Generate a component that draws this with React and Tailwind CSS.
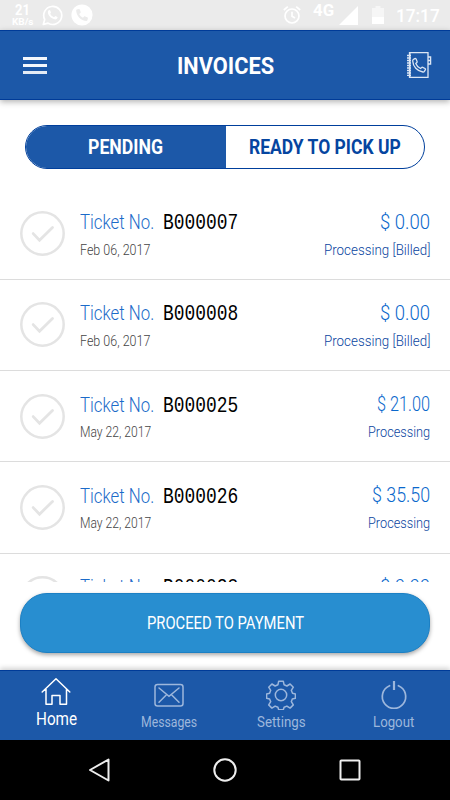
import React, { useLayoutEffect, useRef, useState } from "react";

const invoices = [
  { ticket: "B000007", date: "Feb 06, 2017", dateWidth: 70, amount: "$ 0.00", amountWidth: 50, status: "Processing [Billed]", statusWidth: 106 },
  { ticket: "B000008", date: "Feb 06, 2017", dateWidth: 70, amount: "$ 0.00", amountWidth: 50, status: "Processing [Billed]", statusWidth: 106 },
  { ticket: "B000025", date: "May 22, 2017", dateWidth: 71, amount: "$ 21.00", amountWidth: 53, status: "Processing", statusWidth: 62 },
  { ticket: "B000026", date: "May 22, 2017", dateWidth: 71, amount: "$ 35.50", amountWidth: 58, status: "Processing", statusWidth: 62 },
  { ticket: "B000028", amount: "$ 0.00", amountWidth: 50 },
];

// Condenses a single line of text to the given width
function Condensed({ width, className = "", children }) {
  const ref = useRef(null);
  const [scale, setScale] = useState(1);

  useLayoutEffect(() => {
    setScale(width / ref.current.offsetWidth);
  }, [width, children]);

  return (
    <span className={`block shrink-0 whitespace-nowrap ${className}`} style={{ width }}>
      <span ref={ref} className="inline-block origin-left" style={{ transform: `scaleX(${scale})` }}>
        {children}
      </span>
    </span>
  );
}

function StatusBar() {
  return (
    <div className="flex h-[30px] shrink-0 items-center justify-between bg-[#ebebeb] pl-[11px] pr-[10px] text-white">
      <div className="flex items-center">
        <div className="flex w-[22px] flex-col items-center font-bold">
          <Condensed width={15} className="h-[14px] text-[15.500px] leading-[14px]">21</Condensed>
          <Condensed width={21} className="h-[11px] text-[9px] leading-[11px]">KB/s</Condensed>
        </div>
        <svg className="ml-[9px] h-[22px] w-[21px]" viewBox="0 0 21 22" fill="none" stroke="currentColor">
          <path d="M1.300 20.500l1.400-5A9 9 0 1 1 6 19.100z" strokeWidth="1.700" strokeLinejoin="round" />
          <path d="M6.400 6.500c.8-1 1.500-.6 1.800 0l.8 1.900-.8 1.300c1 1.800 2 2.700 3.800 3.500l1.400-1.200 2 1c.5.4 0 1.500-.8 2.100-1 .7-2.800.3-4.600-.8-2.100-1.300-4-3.800-4.100-5.400 0-1 .1-1.900.5-2.400z" fill="currentColor" stroke="none" />
        </svg>
        <svg className="ml-[8px] h-[22px] w-[22px]" viewBox="0 0 22 22">
          <circle cx="11" cy="11" r="10.600" fill="white" />
          <path d="M5.800 5.500L8 5c.5 0 .7.300.9.800l.8 2.200c.1.400 0 .7-.3 1L8.200 10c.9 1.800 2 2.900 3.800 3.800l1.100-1.200c.3-.3.600-.4 1-.2l2.200.8c.5.2.7.500.6 1l-.5 2.100c-.1.400-.4.700-.9.700C9.900 16.800 5.200 12 5.200 6.300c0-.4.2-.7.6-.8z" fill="#ebebeb" />
        </svg>
      </div>
      <div className="flex h-full items-center">
        <svg className="h-[20px] w-[18px]" viewBox="0 0 18 20" fill="none" stroke="currentColor" strokeWidth="1.700">
          <circle cx="9" cy="11" r="7" />
          <path d="M9 6.800v4.500l3 1.800M.8 5l4-3.400M17.200 5l-4-3.400" />
        </svg>
        <Condensed width={21} className="mb-[8px] ml-[12px] text-[16px] leading-[16px] font-bold">4G</Condensed>
        <svg className="ml-[5px] h-[19px] w-[19px]" viewBox="0 0 19 19">
          <path d="M19 0v19H0z" fill="white" />
        </svg>
        <svg className="ml-[14px] h-[18px] w-[12px]" viewBox="0 0 12 18">
          <path d="M3.500 0h5v2H12v9H0V2h3.500z" fill="#f6f6f6" />
          <path d="M0 11h12v7H0z" fill="white" />
        </svg>
        <Condensed width={44} className="mt-[2px] ml-[12px] text-[18px] leading-[18px] font-medium">17:17</Condensed>
      </div>
    </div>
  );
}

function Header() {
  return (
    <header className="z-10 flex h-[70px] shrink-0 items-center justify-between border-y border-[#003b98] bg-[#1c58a8] pr-[18px] pl-[23px] text-white shadow-[0_2px_6px_rgba(0,0,0,0.3)]">
      <div className="flex w-[24px] flex-col gap-[4px]">
        <span className="h-[3px] bg-[#f4f7fc]" />
        <span className="h-[3px] bg-[#f4f7fc]" />
        <span className="h-[3px] bg-[#e4ebf5]" />
      </div>
      <h1 className="mt-[2px] mr-[3px]">
        <Condensed width={97} className="text-[24px] leading-[30px] font-bold">INVOICES</Condensed>
      </h1>
      <svg className="h-[28px] w-[26px]" viewBox="0 0 26 28" fill="none" stroke="#dce6f4" strokeWidth="1.300">
        <path d="M3.500 1.600H22v24.800H3.500z" />
        <path d="M4.500 1.600v24.800" strokeWidth="1" strokeOpacity=".5" />
        <path d="M1 4.500h4M1 7h4M1 9.500h4M1 12h4M1 14.500h4M1 17h4M1 19.500h4M1 22h4M1 24.300h4" />
        <path d="M22 6h2.600v7H22M22 9.500h2.600" />
        <path d="M7.300 8.500l1.500-.9c.6-.3 1-.1 1.300.5l1 2.500c.2.500 0 .8-.3 1l-1 .9c.9 2.300 2.400 4 4.700 5l1.100-1c.3-.3.700-.4 1.100-.2l2.300 1.200c.5.3.7.700.4 1.200l-1 1.600c-.4.6-.9.8-1.500.7-5.700-.9-9.900-5.500-10.200-11 0-.7.100-1.200.6-1.500z" />
      </svg>
    </header>
  );
}

function Tabs() {
  return (
    <div className="mx-[25px] mt-[25px] flex h-[44px] shrink-0 overflow-hidden rounded-[22px] border border-[#003f9c] font-bold">
      <div className="flex w-[200px] items-center justify-center bg-[#1c58a8] text-white">
        <Condensed width={75} className="mr-[2px] text-[20.500px] leading-[30px]">PENDING</Condensed>
      </div>
      <div className="flex flex-1 items-center justify-center text-[#0545a0]">
        <Condensed width={152} className="text-[20.500px] leading-[30px]">READY TO PICK UP</Condensed>
      </div>
    </div>
  );
}

function InvoiceRow({ invoice }) {
  return (
    <li className="flex h-[91.300px] border-b-[1.500px] border-[#dcdcdc] px-5 pt-5">
      <svg className="mt-[2.500px] h-[45px] w-[45px] shrink-0" viewBox="0 0 45 45" fill="none" stroke="#e4e4e4">
        <circle cx="22.500" cy="22.500" r="21.200" strokeWidth="2.500" />
        <path d="M13.200 22.600l6.300 6.600 13-12.800" strokeWidth="2.800" strokeLinecap="round" />
      </svg>
      <div className="ml-[15px]">
        <div className="flex h-[27px] items-center text-[20px] leading-7">
          <Condensed width={74} className="font-light text-[#1b6bc9]">Ticket No.</Condensed>
          <Condensed width={75} className="mt-[2px] ml-[9px] font-['Liberation_Mono',monospace] text-[21.500px] text-black">{invoice.ticket}</Condensed>
        </div>
        {invoice.date && (
          <Condensed width={invoice.dateWidth} className="h-7 text-[15px] leading-7 font-light text-[#444]">{invoice.date}</Condensed>
        )}
      </div>
      <div className="ml-auto flex flex-col items-end">
        <Condensed width={invoice.amountWidth} className="h-[27px] text-[20px] leading-[27px] font-light text-[#0a68cc]">{invoice.amount}</Condensed>
        {invoice.status && (
          <Condensed width={invoice.statusWidth} className="h-7 text-[15px] leading-7 font-light text-[#0a45a0]">{invoice.status}</Condensed>
        )}
      </div>
    </li>
  );
}

function NavBar() {
  return (
    <nav className="z-10 grid h-[70px] shrink-0 grid-cols-4 border-t border-[#003b98] bg-[#1c58a8] text-[#9db7dc] shadow-[0_-2px_5px_rgba(0,0,0,0.18)]">
      <div className="flex flex-col items-center pt-[6px] text-white">
        <svg className="h-[30px] w-[30px]" viewBox="0 0 30 30" fill="none" stroke="currentColor" strokeWidth="1.500" strokeLinecap="round" strokeLinejoin="round">
          <path d="M1.200 15L15 1.700 28.800 15M5 12v15.300h6V18.500h8v8.800h6.500V12" />
        </svg>
        <Condensed width={41} className="text-[17.500px] leading-6">Home</Condensed>
      </div>
      <div className="flex flex-col items-center pt-[12px]">
        <svg className="h-[24px] w-[30px]" viewBox="0 0 30 24" fill="none" stroke="currentColor" strokeWidth="1.500" strokeLinecap="round">
          <rect x="1" y="1.500" width="28" height="21.500" rx="2.500" />
          <path d="M5 5l10 8.300L25 5M5 19.200l7.500-7.500M25 19.200l-7.500-7.500" />
        </svg>
        <Condensed width={56} className="mt-[3px] text-[15.500px] leading-6">Messages</Condensed>
      </div>
      <div className="flex flex-col items-center pt-[9px]">
        <svg className="h-[30px] w-[30px]" viewBox="0 0 30 30" fill="none" stroke="currentColor" strokeWidth="1.500" strokeLinejoin="round">
          <path d="M12.700 1.200h4.600l.8 3.600 2.800 1.200 3.200-2 3.200 3.200-2 3.100 1.200 2.900 2.900.7v4.300l-3.100.7-1 2.800 2 3.200-3.200 3.200-3.200-2-2.800 1.200-.8 2.500h-4.600l-.8-2.500-2.800-1.200-3.200 2-3.200-3.200 2-3.200-1.100-2.800-3-.7v-4.300l3-.7 1.100-2.900-2-3.100L5.900 4l3.200 2 2.800-1.200z" />
          <circle cx="15" cy="15" r="5.700" />
        </svg>
        <Condensed width={49} className="text-[15.500px] leading-6">Settings</Condensed>
      </div>
      <div className="flex flex-col items-center pt-[9px]">
        <svg className="h-[30px] w-[30px]" viewBox="0 0 30 30" fill="none" stroke="currentColor" strokeWidth="1.700" strokeLinecap="round">
          <path d="M15 1v9" strokeWidth="2.200" strokeLinecap="butt" />
          <path d="M10.600 5.700a11.700 11.700 0 1 0 8.800 0" />
        </svg>
        <Condensed width={41} className="text-[15.500px] leading-6">Logout</Condensed>
      </div>
    </nav>
  );
}

function SystemBar() {
  return (
    <div className="z-10 flex h-[60px] shrink-0 items-center justify-center gap-[101px] bg-black text-[#eee]">
      <svg className="h-[24px] w-[24px]" viewBox="0 0 24 24" fill="none" stroke="currentColor" strokeWidth="2" strokeLinejoin="round">
        <path d="M20.500 1.500v21L2 12z" />
      </svg>
      <svg className="h-[24px] w-[24px]" viewBox="0 0 24 24" fill="none" stroke="currentColor" strokeWidth="2">
        <circle cx="12" cy="12" r="10.700" />
      </svg>
      <svg className="h-[24px] w-[24px]" viewBox="0 0 24 24" fill="none" stroke="currentColor" strokeWidth="2">
        <rect x="2.500" y="2.500" width="19" height="19" rx=".8" />
      </svg>
    </div>
  );
}

export default function App() {
  return (
    <div className="flex h-[800px] w-[450px] flex-col overflow-hidden bg-white font-['Roboto',sans-serif]">
      <StatusBar />
      <Header />
      <Tabs />
      <ul className="mt-[19.500px] h-[393.500px] shrink-0 overflow-hidden">
        {invoices.map((invoice) => (
          <InvoiceRow key={invoice.ticket} invoice={invoice} />
        ))}
      </ul>
      <div className="flex flex-1 items-start px-5 pt-[10.500px]">
        <button className="flex h-[60px] w-full items-center justify-center rounded-[27px] border border-[#1c80c4] bg-[#288ed0] text-white shadow-[0_2px_4px_rgba(0,0,0,0.35)]">
          <Condensed width={157} className="text-[19px] leading-7">PROCEED TO PAYMENT</Condensed>
        </button>
      </div>
      <NavBar />
      <SystemBar />
    </div>
  );
}
